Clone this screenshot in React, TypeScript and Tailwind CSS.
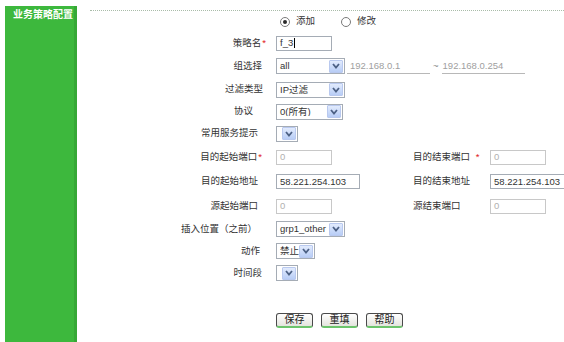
import type { ReactNode } from 'react';

const font = 'font-["Liberation_Sans","Noto_Sans_CJK_SC",sans-serif]';

const Arrow = () => (
  <div className="w-[14px] h-[13px] mr-[1px] flex items-center justify-center rounded-[1px] border border-[#b9c9ef] bg-gradient-to-b from-[#e2ebfd] to-[#b8cdf6]">
    <svg width="8" height="6" viewBox="0 0 8 6">
      <polyline points="1,1 4,4.5 7,1" fill="none" stroke="#4d6185" strokeWidth="1.8" />
    </svg>
  </div>
);

const Select = ({ w, text }: { w: string; text?: string }) => (
  <div className={`${w} h-[16px] flex items-center border border-[#a5acb5] bg-white shrink-0`}>
    <span className="flex-1 pl-[3px] text-[9.5px] text-[#333] leading-none whitespace-nowrap overflow-hidden">
      {text}
    </span>
    <Arrow />
  </div>
);

const Input = ({
  w,
  text,
  disabled,
  caret,
}: {
  w: string;
  text: string;
  disabled?: boolean;
  caret?: boolean;
}) => (
  <div
    className={`${w} h-[15px] flex items-center pl-[3px] border shrink-0 bg-white text-[9.5px] leading-none whitespace-nowrap ${
      disabled ? 'border-[#c8c8c8] text-[#b0b0b0]' : 'border-[#a5acb5] text-[#333]'
    }`}
  >
    {text}
    {caret && <span className="w-px h-[10px] bg-black ml-[1px]" />}
  </div>
);

const Star = () => <span className="text-[#e02020] ml-[1px]">*</span>;

interface RowProps {
  h: string;
  label?: ReactNode;
  pr: string;
  children?: ReactNode;
  wide?: boolean;
  right?: { label: ReactNode; control: ReactNode };
}

const Row = ({ h, label, pr, children, wide, right }: RowProps) => (
  <div className={`${h} flex items-center`}>
    <div className={`w-[176px] shrink-0 text-right whitespace-nowrap ${pr}`}>{label}</div>
    <div className={`${wide ? 'flex-1' : 'w-[147px]'} shrink-0 pl-[10px] flex items-center`}>
      {children}
    </div>
    {right && (
      <>
        <div className="w-[77px] shrink-0 whitespace-nowrap">{right.label}</div>
        {right.control}
      </>
    )}
  </div>
);

const Button = ({ text }: { text: string }) => (
  <div className="w-[37px] h-[15px] flex items-center justify-center rounded-[3px] border border-[#4a4a4a] border-b-[2px] border-b-[#6cc46c] bg-gradient-to-b from-white to-[#e4e4de] text-[10px] text-[#222] leading-none">
    {text}
  </div>
);

export default function App() {
  return (
    <div className={`w-[564px] h-[342px] bg-white flex overflow-hidden text-[9.5px] text-[#333] ${font}`}>
      {/* 左侧栏 */}
      <div className="ml-[5px] mt-[6px] w-[72px] shrink-0 bg-[#3db83d] border-r-[3px] border-[#36a836]">
        <div className="pt-[3px] pl-[8px] text-[10px] font-bold text-white leading-[12px] whitespace-nowrap">
          业务策略配置
        </div>
      </div>

      {/* 主体 */}
      <div className="flex-1 pl-[13px] pt-[10px]">
        <div className="border-t border-dotted border-[#a9bca9]">
          <Row h="h-[21px]" pr="">
            <div className="ml-[4px] flex items-center gap-[6px]">
              <span className="w-[10px] h-[10px] rounded-full border border-[#7a7a7a] flex items-center justify-center">
                <span className="w-[4px] h-[4px] rounded-full bg-[#2a2a2a]" />
              </span>
              <span>添加</span>
              <span className="ml-[20px] w-[10px] h-[10px] rounded-full border border-[#7a7a7a]" />
              <span>修改</span>
            </div>
          </Row>

          <Row h="h-[22px]" pr="pr-0" label={<>策略名<Star /></>}>
            <Input w="w-[56px]" text="f_3" caret />
          </Row>

          <Row h="h-[24px]" pr="pr-[4px]" label="组选择" wide>
            <Select w="w-[69px]" text="all" />
            <div className="ml-[2px] w-[83px] h-[15px] flex items-center pl-[3px] border-b border-[#b8b8b8] text-[#a0a0a0] text-[9.5px] leading-none">
              192.168.0.1
            </div>
            <span className="ml-[3px] mr-[3px] text-[#888]">~</span>
            <div className="w-[83px] h-[15px] flex items-center pl-[1px] border-b border-[#b8b8b8] text-[#a0a0a0] text-[9.5px] leading-none">
              192.168.0.254
            </div>
          </Row>

          <Row h="h-[23px]" pr="pr-[3px]" label="过滤类型">
            <Select w="w-[69px]" text="IP过滤" />
          </Row>

          <Row h="h-[21px]" pr="pr-[13px]" label="协议">
            <Select w="w-[67px]" text="0(所有)" />
          </Row>

          <Row h="h-[23px]" pr="pr-[8px]" label="常用服务提示">
            <Select w="w-[22px]" />
          </Row>

          <Row
            h="h-[24px]"
            pr="pr-[4px]"
            label={<>目的起始端口<Star /></>}
            right={{
              label: <>目的结束端口 <span className="ml-[3px] text-[#e02020]">*</span></>,
              control: <Input w="w-[56px]" text="0" disabled />,
            }}
          >
            <Input w="w-[56px]" text="0" disabled />
          </Row>

          <Row
            h="h-[25px]"
            pr="pr-[8px]"
            label="目的起始地址"
            right={{
              label: '目的结束地址',
              control: <Input w="w-[84px]" text="58.221.254.103" />,
            }}
          >
            <Input w="w-[84px]" text="58.221.254.103" />
          </Row>

          <Row
            h="h-[24px]"
            pr="pr-[8px]"
            label="源起始端口"
            right={{
              label: '源结束端口',
              control: <Input w="w-[56px]" text="0" disabled />,
            }}
          >
            <Input w="w-[56px]" text="0" disabled />
          </Row>

          <Row h="h-[22px]" pr="pr-[9px]" label="插入位置（之前）">
            <Select w="w-[69px]" text="grp1_other" />
          </Row>

          <Row h="h-[22px]" pr="pr-[6px]" label="动作">
            <Select w="w-[39px]" text="禁止" />
          </Row>

          <Row h="h-[22px]" pr="pr-[4px]" label="时间段">
            <Select w="w-[22px]" />
          </Row>

          <div className="h-[26px]" />
          <div className="h-[20px] flex items-center pl-[186px] gap-[8px]">
            <Button text="保存" />
            <Button text="重填" />
            <Button text="帮助" />
          </div>
        </div>
      </div>
    </div>
  );
}
